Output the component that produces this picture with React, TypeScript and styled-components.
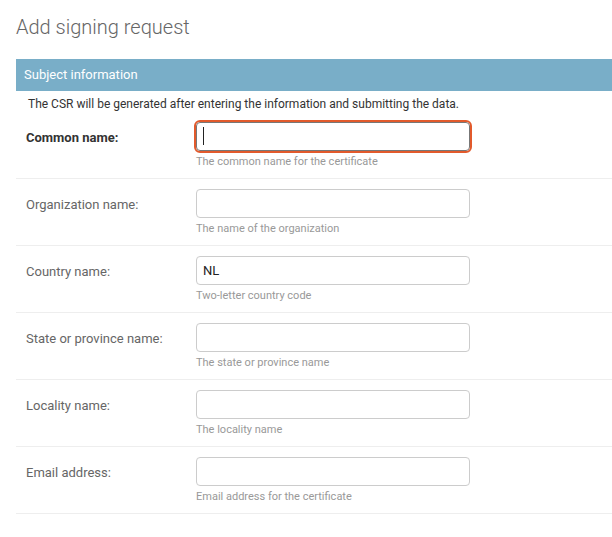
import React from "react";
import styled, { createGlobalStyle, css } from "styled-components";

const Global = createGlobalStyle`
  html, body { margin: 0; padding: 0; background: #fff; }
  body { font-family: Roboto, "Liberation Sans", sans-serif; color: #333; overflow: hidden; }
  * { box-sizing: border-box; }
`;

const Page = styled.div`
  padding: 15px 0 0 16px;
  width: 612px;
`;

const Title = styled.h1`
  margin: 0 0 20px;
  font-size: 20px;
  line-height: 24px;
  font-weight: 300;
  color: #666;
`;

const Fieldset = styled.fieldset`
  margin: 0;
  padding: 0;
  border: none;
  min-width: 0;
`;

const Legend = styled.h2`
  margin: 0;
  padding: 8px;
  font-size: 13px;
  line-height: 16px;
  font-weight: 400;
  color: #fff;
  background: #79aec8;
`;

const Description = styled.div`
  padding: 5px 0 0 12px;
  font-size: 12px;
  line-height: 16px;
  color: #333;
`;

const Row = styled.div`
  display: flex;
  padding: 10px;
  border-bottom: 1px solid #eee;
`;

const Label = styled.label<{ $required?: boolean }>`
  width: 170px;
  flex: none;
  padding: 7px 10px 0 0;
  font-size: 13px;
  line-height: 18px;
  color: #666;
  ${(p) =>
    p.$required &&
    css`
      font-weight: 700;
      color: #333;
    `}
`;

const Field = styled.div`
  display: flex;
  flex-direction: column;
`;

const InputWrap = styled.div`
  position: relative;
  width: 274px;
`;

const Input = styled.input<{ $focused?: boolean }>`
  display: block;
  width: 274px;
  height: 29px;
  margin: 0;
  padding: 5px 6px;
  border: 1px solid #ccc;
  border-radius: 4px;
  font-family: Roboto, "Liberation Sans", sans-serif;
  font-size: 13px;
  font-weight: 400;
  color: #222;
  background: #fff;
  outline: none;
  ${(p) =>
    p.$focused &&
    css`
      border-color: #777;
      outline: 2px solid #e25a2c;
      outline-offset: 0;
    `}
`;

const Caret = styled.span`
  position: absolute;
  left: 7px;
  top: 5px;
  width: 1px;
  height: 18px;
  background: #222;
`;

const Help = styled.div`
  margin-top: 4px;
  font-size: 11px;
  line-height: 13px;
  color: #999;
`;

const fields = [
  { label: "Common name:", help: "The common name for the certificate", required: true, focused: true, value: "" },
  { label: "Organization name:", help: "The name of the organization", value: "" },
  { label: "Country name:", help: "Two-letter country code", value: "NL" },
  { label: "State or province name:", help: "The state or province name", value: "" },
  { label: "Locality name:", help: "The locality name", value: "" },
  { label: "Email address:", help: "Email address for the certificate", value: "" },
];

export default function App() {
  return (
    <>
      <Global />
      <Page>
        <Title>Add signing request</Title>
        <Fieldset>
          <Legend>Subject information</Legend>
          <Description>
            The CSR will be generated after entering the information and submitting the data.
          </Description>
          {fields.map((f) => (
            <Row key={f.label}>
              <Label $required={f.required}>{f.label}</Label>
              <Field>
                <InputWrap>
                  <Input $focused={f.focused} defaultValue={f.value} readOnly />
                  {f.focused && <Caret />}
                </InputWrap>
                <Help>{f.help}</Help>
              </Field>
            </Row>
          ))}
        </Fieldset>
      </Page>
    </>
  );
}
